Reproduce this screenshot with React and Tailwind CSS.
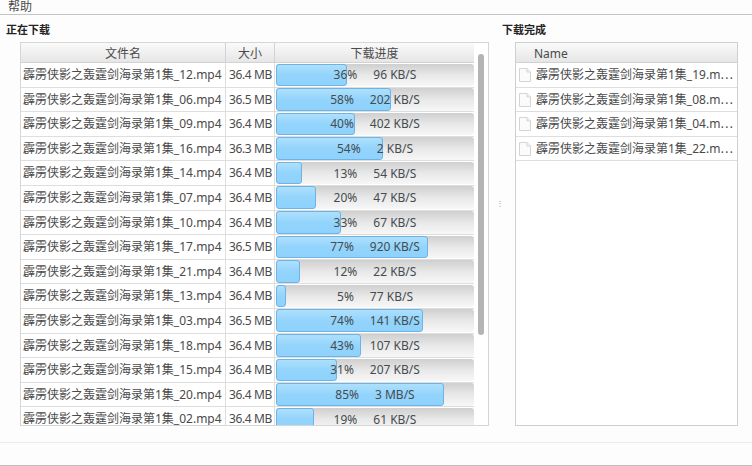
import React from "react";

const downloads = [
  ["12", "36.4 MB", 36, "96 KB/S"],
  ["06", "36.5 MB", 58, "202 KB/S"],
  ["09", "36.4 MB", 40, "402 KB/S"],
  ["16", "36.3 MB", 54, "2 KB/S"],
  ["14", "36.4 MB", 13, "54 KB/S"],
  ["07", "36.4 MB", 20, "47 KB/S"],
  ["10", "36.4 MB", 33, "67 KB/S"],
  ["17", "36.5 MB", 77, "920 KB/S"],
  ["21", "36.4 MB", 12, "22 KB/S"],
  ["13", "36.4 MB", 5, "77 KB/S"],
  ["03", "36.5 MB", 74, "141 KB/S"],
  ["18", "36.4 MB", 43, "107 KB/S"],
  ["15", "36.4 MB", 31, "207 KB/S"],
  ["20", "36.4 MB", 85, "3 MB/S"],
  ["02", "36.4 MB", 19, "61 KB/S"],
];

const finished = ["19", "08", "04", "22"];

const title = (n) => `霹雳侠影之轰霆剑海录第1集_${n}`;

const FileIcon = () => (
  <svg width="12" height="14" viewBox="0 0 12 14" className="shrink-0">
    <path d="M.5.5h7.5l3.5 3.5v9.5H.5z" fill="#fbfbfb" stroke="#d4d4d4" />
    <path d="M8 .5V4h3.5" fill="#f0f0f0" stroke="#d4d4d4" />
  </svg>
);

const Progress = ({ pct, speed }) => (
  <div className="relative h-full flex-1 rounded-[3px] bg-gradient-to-b from-[#cfcfcf] via-[#e8e8e8] to-[#f7f7f7]">
    <div
      className="absolute inset-y-0 left-0 rounded-[3px] border border-[#6db3e4] bg-gradient-to-b from-[#aee0fd] via-[#93d4fc] to-[#8ed2fd]"
      style={{ width: `${pct}%` }}
    />
    <div className="absolute inset-0 flex items-center justify-center gap-4 text-[#454c50]">
      <span>{pct}%</span>
      <span>{speed}</span>
    </div>
  </div>
);

const App = () => {
  return (
    <div className="flex h-[466px] w-[752px] flex-col overflow-hidden bg-[#fdfdfd] text-[12px] text-[#4a4a4a] font-['Noto_Sans','Noto_Sans_CJK_SC',sans-serif]">
      <div className="h-[15px] shrink-0 border-b border-[#c4c4c4] pl-2 text-[12px] leading-[14px]">
        帮助
      </div>

      <div className="flex min-h-0 flex-1">
        {/* downloading */}
        <div className="flex w-[489px] shrink-0 flex-col pl-[6px]">
          <div className="h-[27px] pt-[8px] text-[11px] leading-[14px] font-bold text-[#222]">正在下载</div>
          <div className="ml-[14px] flex h-[384px] overflow-hidden border border-[#d6d6d6] bg-white">
            <div className="w-[453px] shrink-0">
              <div className="flex h-[20px] border-b border-[#d2d2d2] bg-gradient-to-b from-[#fafafa] to-[#e6e6e6] leading-[21px]">
                <div className="w-[205px] border-r border-[#d2d2d2] text-center">文件名</div>
                <div className="w-[49px] border-r border-[#d2d2d2] text-center">大小</div>
                <div className="flex-1 text-center">下载进度</div>
              </div>
              {downloads.map(([n, size, pct, speed]) => (
                <div key={n} className="flex h-[24.6px] border-b border-[#dedede] leading-[23px]">
                  <div className="w-[205px] shrink-0 border-r border-[#dedede] pl-[2px] whitespace-nowrap">
                    {title(n)}.mp4
                  </div>
                  <div className="w-[49px] shrink-0 border-r border-[#dedede] pl-[3px] tracking-[-0.4px] whitespace-nowrap">{size}</div>
                  <div className="flex flex-1 py-[0.5px] pl-[1px]">
                    <Progress pct={pct} speed={speed} />
                  </div>
                </div>
              ))}
            </div>
            <div className="flex-1 pt-[11px] pl-[4px]">
              <div className="h-[281px] w-[6px] rounded-[3px] bg-[#b4b4b4]" />
            </div>
          </div>
        </div>

        {/* splitter */}
        <div className="flex w-[26px] shrink-0 flex-col pl-[13px]">
          <div className="h-[27px] pt-[8px] text-[11px] leading-[14px] font-bold whitespace-nowrap text-[#222]">下载完成</div>
          <div className="mt-[159px] ml-[-6px] text-[8px] leading-[4px] text-[#999]">⋮</div>
        </div>

        {/* finished */}
        <div className="flex w-[223px] shrink-0 flex-col pt-[27px]">
          <div className="h-[384px] overflow-hidden border border-[#cfcfcf] bg-white">
            <div className="h-[20px] border-b border-[#d2d2d2] bg-gradient-to-b from-[#fafafa] to-[#e6e6e6] pl-[18px] leading-[21px]">
              Name
            </div>
            {finished.map((n) => (
              <div key={n} className="flex h-[24.6px] items-center gap-[5px] border-b border-[#dedede] pt-[1px] pl-[3px]">
                <FileIcon />
                <span className="whitespace-nowrap">{title(n)}.m⋯</span>
              </div>
            ))}
          </div>
        </div>
      </div>

      <div className="h-[24px] shrink-0 border-t border-b border-t-[#ececec] border-b-[#bdbdbd] bg-[#fdfdfd]" />
    </div>
  );
};

export default App;
